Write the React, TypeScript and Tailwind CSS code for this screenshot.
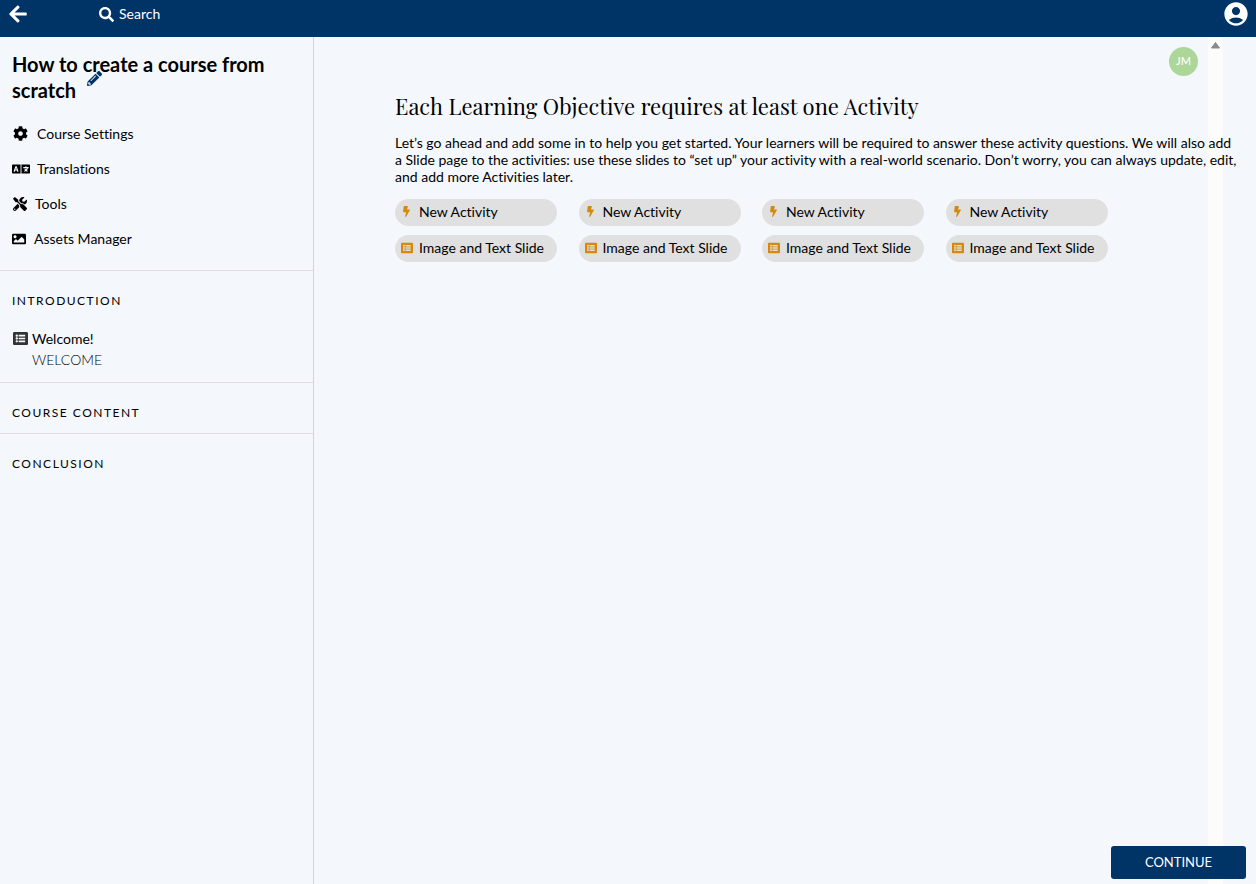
import { FaArrowLeft, FaBolt, FaCog, FaImage, FaLanguage, FaListAlt, FaPencilAlt, FaSearch, FaTools } from 'react-icons/fa'
import { MdAccountCircle } from 'react-icons/md'

const columns = [1, 2, 3, 4]

function Header() {
  return (
    <header className="flex h-[37px] items-start justify-between bg-[#003366] text-white">
      <div className="flex items-start">
        <button aria-label="Back" className="flex h-7 w-[99px] items-center pl-2">
          <FaArrowLeft size={20} />
        </button>
        <button className="flex h-7 items-center gap-[5px]">
          <FaSearch size={15} />
          <span className="pb-[2px]">Search</span>
        </button>
      </div>
      <button aria-label="Account" className="mr-[6px]">
        <MdAccountCircle size={28} />
      </button>
    </header>
  )
}

function Sidebar() {
  return (
    <aside className="w-[314px] shrink-0 border-r border-[#d4d4d5]">
      <div className="border-b border-[#dededf] px-3 pt-[14px] pb-[14px]">
        <div className="relative mb-[13px]">
          <h1 className="text-[20px] leading-[26px] font-bold">How to create a course from scratch</h1>
          <button aria-label="Edit title" className="absolute top-5 left-[75px] text-[#003366]">
            <FaPencilAlt size={15} />
          </button>
        </div>
        <nav>
          <a href="#settings" className="flex h-[35px] items-center gap-[9px] pl-[1px]">
            <FaCog size={15} />
            Course Settings
          </a>
          <a href="#translations" className="flex h-[35px] items-center gap-[7px]">
            <FaLanguage size={18} />
            Translations
          </a>
          <a href="#tools" className="flex h-[35px] items-center gap-2 pl-[1px]">
            <FaTools size={14} />
            Tools
          </a>
          <a href="#assets" className="flex h-[35px] items-center gap-2">
            <FaImage size={14} />
            Assets Manager
          </a>
        </nav>
      </div>

      <section className="border-b border-[#dededf] px-3 pt-[22px] pb-3">
        <h2 className="mb-[19px] text-[12px] leading-4 tracking-[1.5px]">INTRODUCTION</h2>
        <a href="#welcome" className="flex gap-[4px] pl-[1px]">
          <FaListAlt size={15} className="mt-[3px] text-[#333333]" />
          <span className="leading-[21px]">
            <span className="block">Welcome!</span>
            <span className="block font-light">WELCOME</span>
          </span>
        </a>
      </section>

      <section className="border-b border-[#dededf] px-3 pt-[22px] pb-3">
        <h2 className="text-[12px] leading-4 tracking-[1.5px]">COURSE CONTENT</h2>
      </section>

      <section className="px-3 pt-[22px] pb-3">
        <h2 className="text-[12px] leading-4 tracking-[1.5px]">CONCLUSION</h2>
      </section>
    </aside>
  )
}

export default function App() {
  return (
    <div className="flex min-h-screen flex-col bg-[#f4f8fd] font-['Lato',sans-serif] text-[14px] text-black [font-variant-ligatures:none]">
      <Header />
      <div className="flex flex-1">
        <Sidebar />
        <main className="relative flex min-w-0 flex-1 flex-col">
          {/* Scroll track, runs behind the content */}
          <div className="absolute inset-y-0 right-[33px] w-[15px] bg-[#fcfcfc]">
            <svg viewBox="0 0 15 16" className="w-[15px]">
              <path d="M7.5 5.5 L11.5 11 H3.5 Z" fill="#8b8b8b" stroke="#8b8b8b" strokeWidth="1" strokeLinejoin="round" />
            </svg>
          </div>

          <div className="relative flex justify-end pt-[10px] pr-[58px]">
            <span className="flex size-[29px] items-center justify-center rounded-full bg-[#acd69a] text-[11px] font-medium text-white">
              JM
            </span>
          </div>

          <div className="relative flex-1 pt-4 pr-4 pl-[81px]">
            <h2 className="font-['Playfair_Display','Liberation_Serif',serif] text-[22px] leading-7">
              Each Learning Objective requires at least one Activity
            </h2>
            <p className="mt-[14px] leading-[17px]">
              Let’s go ahead and add some in to help you get started. Your learners will be required to answer these
              activity questions. We will also add a Slide page to the activities: use these slides to “set up” your
              activity with a real-world scenario. Don’t worry, you can always update, edit, and add more Activities
              later.
            </p>
            <div className="mt-[14px] grid max-w-[734px] grid-cols-4">
              {columns.map((col) => (
                <div key={col} className="flex flex-col gap-[9px]">
                  <button className="flex h-[27px] w-[162px] items-center rounded-full bg-[#e0e0e0] pb-[2px] pl-[6px]">
                    <FaBolt size={11} className="mr-[7px] text-[#d4890b]" />
                    New Activity
                  </button>
                  <button className="flex h-[27px] w-[162px] items-center rounded-full bg-[#e0e0e0] pb-[2px] pl-[6px]">
                    <FaListAlt size={12} className="mr-[6px] text-[#d4890b]" />
                    Image and Text Slide
                  </button>
                </div>
              ))}
            </div>
          </div>

          <div className="relative flex justify-end pr-[10px] pb-[5px]">
            <button className="h-[33px] w-[135px] rounded-[3px] bg-[#003366] text-[13px] text-white">
              CONTINUE
            </button>
          </div>
        </main>
      </div>
    </div>
  )
}
